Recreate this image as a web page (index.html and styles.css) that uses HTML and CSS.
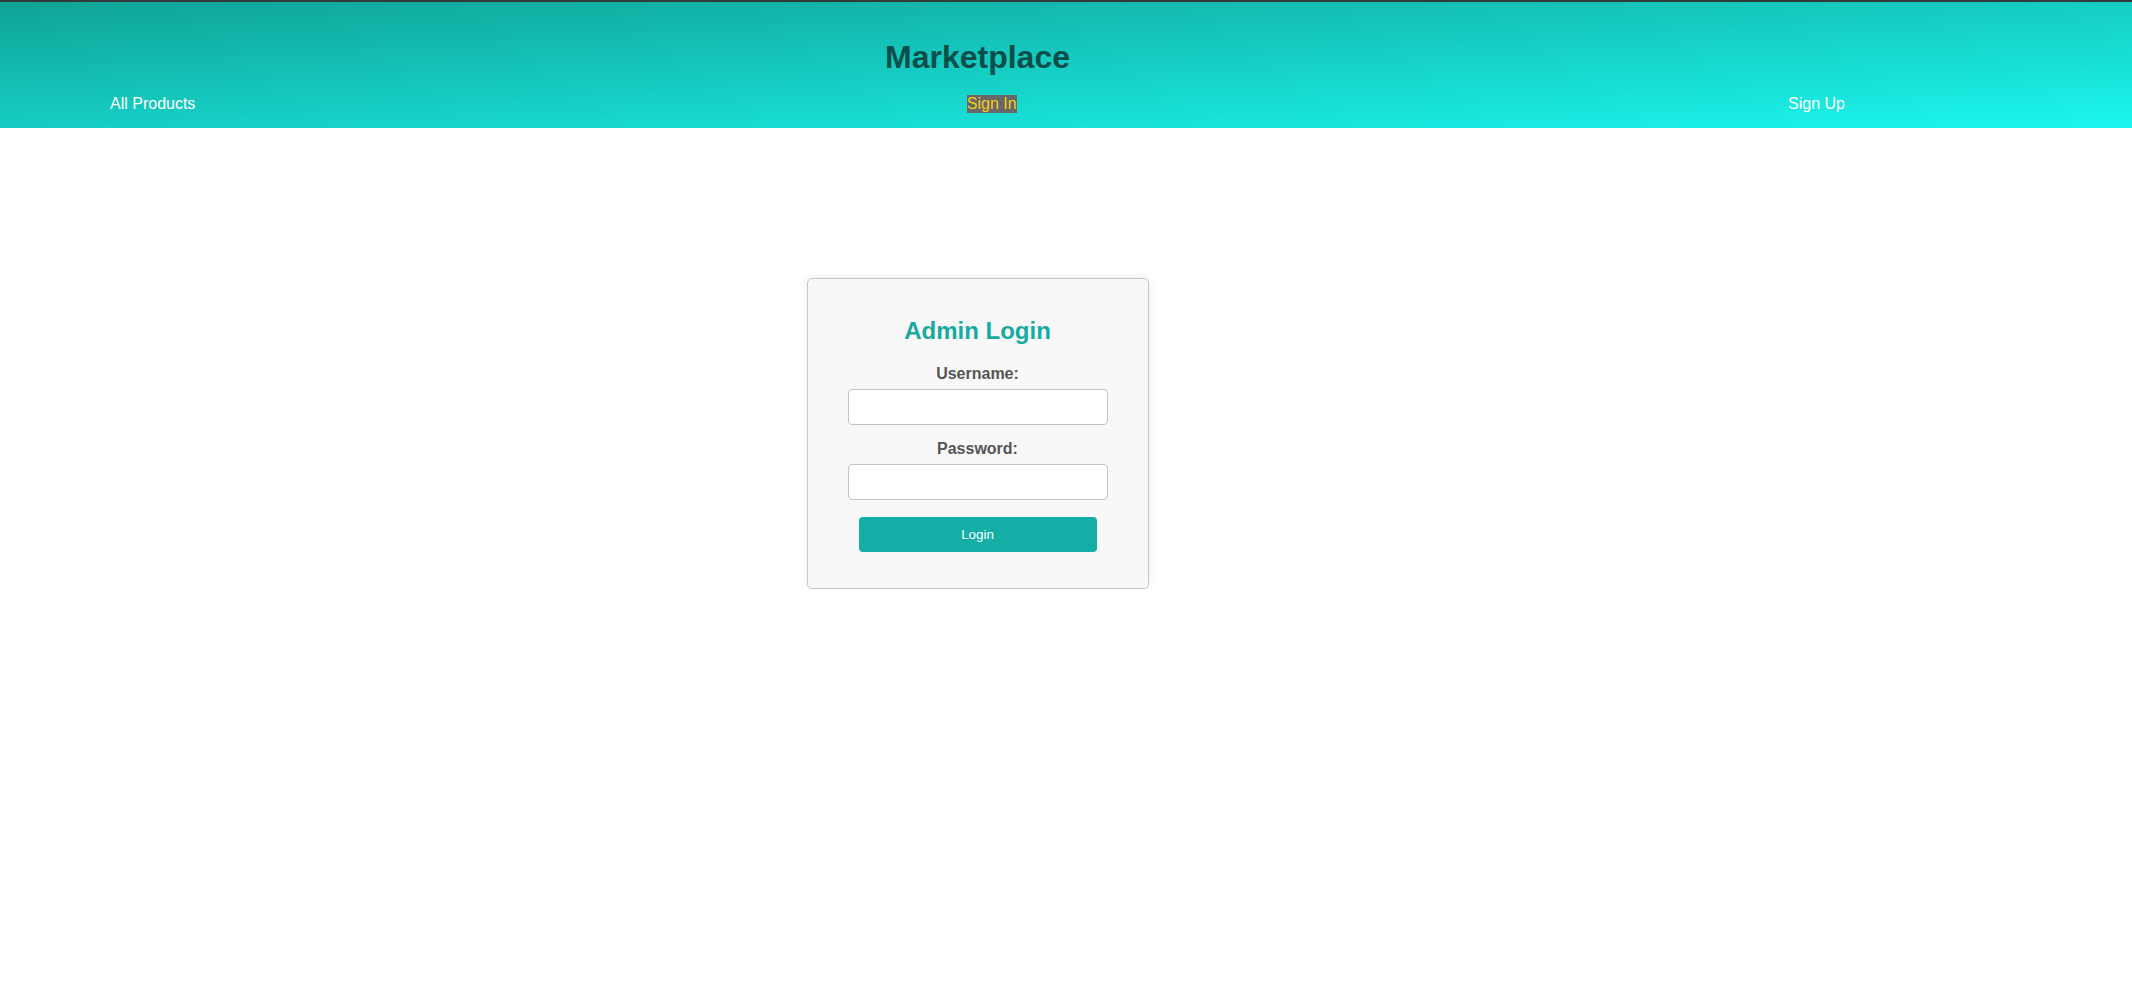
FILE: index.html
```html
<!DOCTYPE html>
<html lang="en">
<head>
<meta charset="utf-8">
<title>Marketplace - Admin Login</title>
<link rel="stylesheet" href="styles.css">
</head>
<body>
<header class="site-header">
  <div class="container">
    <h1 class="brand">Marketplace</h1>
    <nav class="nav">
      <a class="nav-link" href="#">All Products</a>
      <a class="nav-link active" href="#">Sign In</a>
      <a class="nav-link" href="#">Sign Up</a>
    </nav>
  </div>
</header>
<main class="container">
  <form class="login-card">
    <h2 class="login-title">Admin Login</h2>
    <label class="field-label" for="username">Username:</label>
    <input class="field-input" id="username" type="text">
    <label class="field-label second" for="password">Password:</label>
    <input class="field-input" id="password" type="password">
    <button class="login-btn" type="button">Login</button>
  </form>
</main>
</body>
</html>
```
FILE: styles.css
```css
html, body {
  margin: 0;
  padding: 0;
  background: #ffffff;
  font-family: "Liberation Sans", Arial, Helvetica, sans-serif;
}

.container {
  width: 1955px;
}

.site-header {
  border-top: 2px solid #333a3a;
  background: linear-gradient(to bottom right, #10a397, #1bf6ee);
  padding: 37px 0 15px;
}

.brand {
  margin: 0 0 19px;
  text-align: center;
  font-size: 32px;
  line-height: 37px;
  font-weight: bold;
  color: #0b4d49;
}

.nav {
  display: flex;
  justify-content: space-between;
  padding: 0 110px;
  font-size: 16px;
  line-height: 18px;
}

.nav-link {
  color: #ffffff;
  text-decoration: none;
}

.nav-link.active {
  background: #686868;
  color: #f6c81c;
}

.login-card {
  width: 260px;
  margin: 150px auto 0;
  padding: 38px 40px 36px;
  background: #f8f8f8;
  border: 1px solid #c6c6c6;
  border-radius: 5px;
  box-shadow: 0 0 10px rgba(0, 0, 0, 0.08);
  display: flex;
  flex-direction: column;
  align-items: stretch;
}

.login-title {
  margin: 0 0 20px;
  text-align: center;
  font-size: 24px;
  line-height: 28px;
  font-weight: bold;
  color: #16aaa2;
}

.field-label {
  display: block;
  text-align: center;
  font-size: 16px;
  line-height: 18px;
  font-weight: bold;
  color: #555555;
  margin-bottom: 6px;
}

.field-label.second {
  margin-top: 15px;
}

.field-input {
  box-sizing: border-box;
  width: 260px;
  height: 36px;
  margin: 0;
  padding: 0 8px;
  border: 1px solid #c4c4c4;
  border-radius: 4px;
  background: #ffffff;
  font-size: 14px;
}

.login-btn {
  align-self: center;
  width: 238px;
  height: 35px;
  margin-top: 17px;
  border: none;
  border-radius: 4px;
  background: #13afa7;
  color: #ffffff;
  font-family: "Liberation Sans", Arial, sans-serif;
  font-size: 13.33px;
  cursor: pointer;
}
```
